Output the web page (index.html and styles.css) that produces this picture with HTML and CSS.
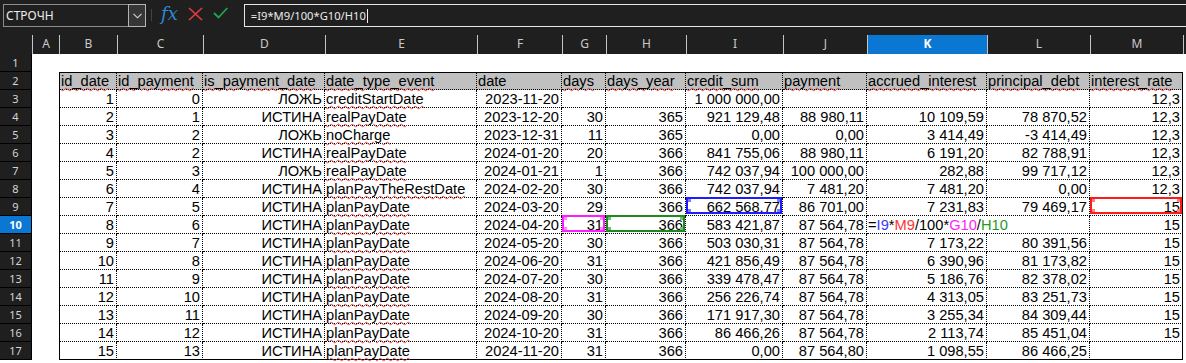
FILE: index.html
```html
<!DOCTYPE html>
<html lang="ru">
<head>
    <meta charset="UTF-8">
    <title>Кредит — расчёт платежей</title>
    <link rel="stylesheet" href="styles.css">
</head>
<body>
    <!-- Панель формул -->
    <div class="toolbar">
        <div class="name-box">
            <span class="name-text">СТРОЧН</span>
            <span class="name-drop">
                <svg width="9" height="6" viewBox="0 0 9 6"><polyline points="0.5,0.8 4.5,4.8 8.5,0.8" fill="none" stroke="#d8d8d8" stroke-width="1.1"/></svg>
            </span>
        </div>
        <span class="tb-sep"></span>
        <span class="fx">fx</span>
        <svg class="tb-icon cancel" width="15" height="14" viewBox="0 0 15 14"><path d="M1 1 L14 13 M14 1 L1 13" stroke="#e23c3c" stroke-width="1.7" fill="none"/></svg>
        <svg class="tb-icon accept" width="15" height="12" viewBox="0 0 15 12"><polyline points="1,6 5.5,10.5 14.3,1" stroke="#1ea64b" stroke-width="1.8" fill="none"/></svg>
        <div class="formula-input">=I9*M9/100*G10/H10<span class="caret"></span></div>
    </div>

    <!-- Лист -->
    <div class="sheet">
        <div class="col-heads">
            <div class="corner"></div>
            <div class="ch">A</div><div class="ch">B</div><div class="ch">C</div><div class="ch">D</div>
            <div class="ch">E</div><div class="ch">F</div><div class="ch">G</div><div class="ch">H</div>
            <div class="ch">I</div><div class="ch">J</div><div class="ch active">K</div><div class="ch">L</div>
            <div class="ch">M</div><div class="ch"></div>
        </div>

        <div class="srow"><div class="rh">1</div></div>

        <div class="srow head">
            <div class="rh">2</div><div class="gap"></div>
            <div class="cell l"><span class="sp">id_date</span></div>
            <div class="cell l"><span class="sp">id_payment</span></div>
            <div class="cell l"><span class="sp">is_payment_date</span></div>
            <div class="cell l"><span class="sp">date_type_event</span></div>
            <div class="cell l">date</div>
            <div class="cell l"><span class="sp">days</span></div>
            <div class="cell l"><span class="sp">days_year</span></div>
            <div class="cell l"><span class="sp">credit_sum</span></div>
            <div class="cell l"><span class="sp">payment</span></div>
            <div class="cell l"><span class="sp">accrued_interest</span></div>
            <div class="cell l"><span class="sp">principal_debt</span></div>
            <div class="cell l"><span class="sp">interest_rate</span></div>
        </div>

        <div class="srow">
            <div class="rh">3</div><div class="gap"></div>
            <div class="cell">1</div><div class="cell">0</div><div class="cell">ЛОЖЬ</div>
            <div class="cell l"><span class="sp">creditStartDate</span></div>
            <div class="cell">2023-11-20</div><div class="cell"></div><div class="cell"></div>
            <div class="cell">1 000 000,00</div><div class="cell"></div><div class="cell"></div><div class="cell"></div>
            <div class="cell">12,3</div>
        </div>

        <div class="srow">
            <div class="rh">4</div><div class="gap"></div>
            <div class="cell">2</div><div class="cell">1</div><div class="cell">ИСТИНА</div>
            <div class="cell l"><span class="sp">realPayDate</span></div>
            <div class="cell">2023-12-20</div><div class="cell">30</div><div class="cell">365</div>
            <div class="cell">921 129,48</div><div class="cell">88 980,11</div><div class="cell">10 109,59</div><div class="cell">78 870,52</div>
            <div class="cell">12,3</div>
        </div>

        <div class="srow">
            <div class="rh">5</div><div class="gap"></div>
            <div class="cell">3</div><div class="cell">2</div><div class="cell">ЛОЖЬ</div>
            <div class="cell l"><span class="sp">noCharge</span></div>
            <div class="cell">2023-12-31</div><div class="cell">11</div><div class="cell">365</div>
            <div class="cell">0,00</div><div class="cell">0,00</div><div class="cell">3 414,49</div><div class="cell">-3 414,49</div>
            <div class="cell">12,3</div>
        </div>

        <div class="srow">
            <div class="rh">6</div><div class="gap"></div>
            <div class="cell">4</div><div class="cell">2</div><div class="cell">ИСТИНА</div>
            <div class="cell l"><span class="sp">realPayDate</span></div>
            <div class="cell">2024-01-20</div><div class="cell">20</div><div class="cell">366</div>
            <div class="cell">841 755,06</div><div class="cell">88 980,11</div><div class="cell">6 191,20</div><div class="cell">82 788,91</div>
            <div class="cell">12,3</div>
        </div>

        <div class="srow">
            <div class="rh">7</div><div class="gap"></div>
            <div class="cell">5</div><div class="cell">3</div><div class="cell">ЛОЖЬ</div>
            <div class="cell l"><span class="sp">realPayDate</span></div>
            <div class="cell">2024-01-21</div><div class="cell">1</div><div class="cell">366</div>
            <div class="cell">742 037,94</div><div class="cell">100 000,00</div><div class="cell">282,88</div><div class="cell">99 717,12</div>
            <div class="cell">12,3</div>
        </div>

        <div class="srow">
            <div class="rh">8</div><div class="gap"></div>
            <div class="cell">6</div><div class="cell">4</div><div class="cell">ИСТИНА</div>
            <div class="cell l"><span class="sp">planPayTheRestDate</span></div>
            <div class="cell">2024-02-20</div><div class="cell">30</div><div class="cell">366</div>
            <div class="cell">742 037,94</div><div class="cell">7 481,20</div><div class="cell">7 481,20</div><div class="cell">0,00</div>
            <div class="cell">12,3</div>
        </div>

        <div class="srow">
            <div class="rh">9</div><div class="gap"></div>
            <div class="cell">7</div><div class="cell">5</div><div class="cell">ИСТИНА</div>
            <div class="cell l"><span class="sp">planPayDate</span></div>
            <div class="cell">2024-03-20</div><div class="cell">29</div><div class="cell">366</div>
            <div class="cell hl hl-blue">662 568,77</div><div class="cell">86 701,00</div><div class="cell">7 231,83</div><div class="cell">79 469,17</div>
            <div class="cell hl hl-red">15</div>
        </div>

        <div class="srow">
            <div class="rh active">10</div><div class="gap"></div>
            <div class="cell">8</div><div class="cell">6</div><div class="cell">ИСТИНА</div>
            <div class="cell l"><span class="sp">planPayDate</span></div>
            <div class="cell">2024-04-20</div><div class="cell hl hl-pink">31</div><div class="cell hl hl-green">366</div>
            <div class="cell">583 421,87</div><div class="cell">87 564,78</div>
            <div class="cell l formula">=<span class="f-i">I9</span>*<span class="f-m">M9</span>/100*<span class="f-g">G10</span>/<span class="f-h">H10</span></div>
            <div class="cell"></div>
            <div class="cell">15</div>
        </div>

        <div class="srow">
            <div class="rh">11</div><div class="gap"></div>
            <div class="cell">9</div><div class="cell">7</div><div class="cell">ИСТИНА</div>
            <div class="cell l"><span class="sp">planPayDate</span></div>
            <div class="cell">2024-05-20</div><div class="cell">30</div><div class="cell">366</div>
            <div class="cell">503 030,31</div><div class="cell">87 564,78</div><div class="cell">7 173,22</div><div class="cell">80 391,56</div>
            <div class="cell">15</div>
        </div>

        <div class="srow">
            <div class="rh">12</div><div class="gap"></div>
            <div class="cell">10</div><div class="cell">8</div><div class="cell">ИСТИНА</div>
            <div class="cell l"><span class="sp">planPayDate</span></div>
            <div class="cell">2024-06-20</div><div class="cell">31</div><div class="cell">366</div>
            <div class="cell">421 856,49</div><div class="cell">87 564,78</div><div class="cell">6 390,96</div><div class="cell">81 173,82</div>
            <div class="cell">15</div>
        </div>

        <div class="srow">
            <div class="rh">13</div><div class="gap"></div>
            <div class="cell">11</div><div class="cell">9</div><div class="cell">ИСТИНА</div>
            <div class="cell l"><span class="sp">planPayDate</span></div>
            <div class="cell">2024-07-20</div><div class="cell">30</div><div class="cell">366</div>
            <div class="cell">339 478,47</div><div class="cell">87 564,78</div><div class="cell">5 186,76</div><div class="cell">82 378,02</div>
            <div class="cell">15</div>
        </div>

        <div class="srow">
            <div class="rh">14</div><div class="gap"></div>
            <div class="cell">12</div><div class="cell">10</div><div class="cell">ИСТИНА</div>
            <div class="cell l"><span class="sp">planPayDate</span></div>
            <div class="cell">2024-08-20</div><div class="cell">31</div><div class="cell">366</div>
            <div class="cell">256 226,74</div><div class="cell">87 564,78</div><div class="cell">4 313,05</div><div class="cell">83 251,73</div>
            <div class="cell">15</div>
        </div>

        <div class="srow">
            <div class="rh">15</div><div class="gap"></div>
            <div class="cell">13</div><div class="cell">11</div><div class="cell">ИСТИНА</div>
            <div class="cell l"><span class="sp">planPayDate</span></div>
            <div class="cell">2024-09-20</div><div class="cell">30</div><div class="cell">366</div>
            <div class="cell">171 917,30</div><div class="cell">87 564,78</div><div class="cell">3 255,34</div><div class="cell">84 309,44</div>
            <div class="cell">15</div>
        </div>

        <div class="srow">
            <div class="rh">16</div><div class="gap"></div>
            <div class="cell">14</div><div class="cell">12</div><div class="cell">ИСТИНА</div>
            <div class="cell l"><span class="sp">planPayDate</span></div>
            <div class="cell">2024-10-20</div><div class="cell">31</div><div class="cell">366</div>
            <div class="cell">86 466,26</div><div class="cell">87 564,78</div><div class="cell">2 113,74</div><div class="cell">85 451,04</div>
            <div class="cell">15</div>
        </div>

        <div class="srow end">
            <div class="rh">17</div><div class="gap"></div>
            <div class="cell">15</div><div class="cell">13</div><div class="cell">ИСТИНА</div>
            <div class="cell l"><span class="sp">planPayDate</span></div>
            <div class="cell">2024-11-20</div><div class="cell">31</div><div class="cell">366</div>
            <div class="cell">0,00</div><div class="cell">87 564,80</div><div class="cell">1 098,55</div><div class="cell">86 466,25</div>
            <div class="cell"></div>
        </div>
    </div>
</body>
</html>
```

FILE: styles.css
```css
* {
    margin: 0;
    padding: 0;
    box-sizing: border-box;
}

:root {
    --cols: 32px 27px 58px 86px 122px 152px 85px 44px 80px 97px 84px 120px 103px 93px 1fr;
    --dark: #1f1f1f;
}

body {
    width: 1186px;
    height: 363px;
    overflow: hidden;
    background: #fff;
    font-family: 'Liberation Sans', Arial, sans-serif;
}

/* Панель формул */
.toolbar {
    display: flex;
    align-items: flex-start;
    height: 35px;
    padding: 4px 0 0 3px;
    background: var(--dark);
    color: #ececec;
    font-family: 'Noto Sans', sans-serif;
    font-size: 12px;
}

.name-box {
    display: flex;
    width: 143px;
    height: 23px;
    border: 1px solid #8c8c8c;
}

.name-text {
    flex: 1;
    padding-left: 2px;
    line-height: 21px;
}

.name-drop {
    width: 18px;
    margin: -1px -1px -1px 0;
    border: 1px solid #b4b4b4;
    background: #363636;
    display: flex;
    align-items: center;
    justify-content: center;
}

.tb-sep {
    width: 1px;
    height: 12px;
    margin: 5px 0 0 5px;
    background: #444;
}

.fx {
    margin-left: 9px;
    font-family: 'DejaVu Serif', 'Liberation Serif', serif;
    font-style: italic;
    font-size: 18px;
    line-height: 20px;
    color: #2f88d4;
}

.tb-icon { display: block; }
.cancel { margin: 3px 0 0 10px; }
.accept { margin: 3px 0 0 10px; }

.formula-input {
    flex: 1;
    height: 23px;
    margin: 0 -2px 0 16px;
    padding-left: 6px;
    border: 1px solid #e6e6e6;
    font-size: 11.2px;
    line-height: 21px;
    white-space: nowrap;
}

.caret {
    display: inline-block;
    width: 1px;
    height: 14px;
    margin-left: 1px;
    vertical-align: -3px;
    background: #f0f0f0;
}

/* Заголовки столбцов и строк */
.col-heads {
    display: grid;
    grid-template-columns: var(--cols);
    height: 19px;
    background: var(--dark);
    font-family: 'Noto Sans', sans-serif;
    font-size: 12px;
    color: #c9c9c9;
}

.ch {
    border-left: 1px solid #c4c4c4;
    text-align: center;
    line-height: 18px;
}

.ch.active {
    background: #0a78d2;
    color: #fff;
    font-weight: bold;
}

.srow {
    display: grid;
    grid-template-columns: var(--cols);
    height: 18px;
}

.rh {
    background: var(--dark);
    border-bottom: 1px solid #000;
    border-right: 1px solid #000;
    font-family: 'Noto Sans', sans-serif;
    font-size: 11px;
    line-height: 17px;
    color: #d4d4d4;
    text-align: center;
}

.rh.active {
    background: #0a78d2;
    color: #fff;
    font-weight: bold;
}

/* Ячейки таблицы */
.cell {
    border-right: 1px dotted #000;
    border-bottom: 1px dotted #000;
    padding: 1px 2px 0 1px;
    font-size: 14.67px;
    line-height: 16px;
    color: #000;
    text-align: right;
    white-space: nowrap;
}

.cell.l { text-align: left; }

.gap + .cell { border-left: 1px solid #000; }
.srow .cell:last-child { border-right: 1px solid #000; }

.head .cell {
    background: #c0c0c0;
    border-top: 1px solid #000;
    padding-top: 0;
}

.end .cell { border-bottom: 1px solid #000; }

.sp {
    text-decoration: underline wavy #ee4a4a;
    text-decoration-thickness: 1px;
    text-underline-offset: 1px;
}

.formula { border-right: none; }

.f-i { color: #3a3aff; }
.f-m { color: #ff3434; }
.f-g { color: #ff1cff; }
.f-h { color: #1e9a1e; }

/* Подсветка ссылок формулы */
.hl { position: relative; }

.hl::after {
    content: '';
    position: absolute;
    top: -1px;
    left: 0;
    right: 0;
    bottom: 1px;
    border: 2px solid var(--hl);
    background:
        linear-gradient(var(--hl2), var(--hl2)) left top / 3px 3px no-repeat,
        linear-gradient(var(--hl2), var(--hl2)) right top / 3px 3px no-repeat,
        linear-gradient(var(--hl2), var(--hl2)) left bottom / 3px 3px no-repeat,
        linear-gradient(var(--hl2), var(--hl2)) right bottom / 3px 3px no-repeat;
}

.hl-blue { --hl: #1c1cff; --hl2: #7a7aff; }
.hl-red { --hl: #ff1a1a; --hl2: #ff8080; }
.hl-pink { --hl: #ff1cff; --hl2: #ff88ff; }
.hl-green { --hl: #1e8a1e; --hl2: #6cbf6c; }
```
